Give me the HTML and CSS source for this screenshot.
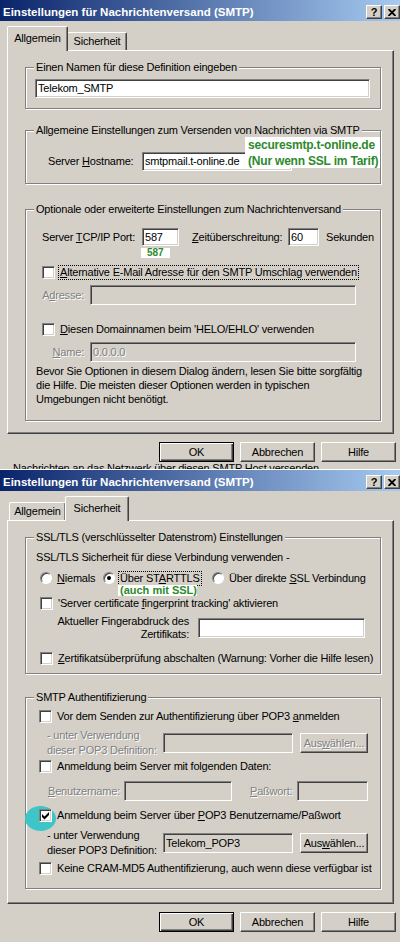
FILE: index.html
```html
<!DOCTYPE html>
<html lang="de">
<head>
    <meta charset="UTF-8">
    <meta name="viewport" content="width=device-width, initial-scale=1.0">
    <title>Einstellungen für Nachrichtenversand (SMTP)</title>
    <link rel="stylesheet" href="styles.css">
</head>
<body>
    <!-- Reiter "Allgemein" -->
    <div class="dialog">
        <div class="titlebar">
            <span class="title">Einstellungen für Nachrichtenversand (SMTP)</span>
            <div class="caption-buttons">
                <span class="caption-btn help">?</span>
                <span class="caption-btn"><svg width="8" height="7" viewBox="0 0 8 7"><path d="M0.5 0 L7.5 7 M7.5 0 L0.5 7" stroke="#000" stroke-width="1.9" fill="none"/></svg></span>
            </div>
        </div>
        <div class="tabs">
            <div class="tab tab-general active">Allgemein</div>
            <div class="tab tab-security">Sicherheit</div>
        </div>
        <div class="panel">
            <fieldset class="group">
                <legend>Einen Namen für diese Definition eingeben</legend>
                <div class="group-body name-body">
                    <div class="input name-input">Telekom_SMTP</div>
                </div>
            </fieldset>

            <fieldset class="group host-group">
                <legend>Allgemeine Einstellungen zum Versenden von Nachrichten via SMTP</legend>
                <div class="group-body host-body">
                    <div class="row host-row">
                        <span class="host-label">Server <u>H</u>ostname:</span>
                        <div class="input host-input">smtpmail.t-online.de</div>
                        <div class="note host-note">securesmtp.t-online.de<br>(Nur wenn SSL im Tarif)</div>
                    </div>
                </div>
            </fieldset>

            <fieldset class="group extra-group">
                <legend>Optionale oder erweiterte Einstellungen zum Nachrichtenversand</legend>
                <div class="group-body extra-body">
                    <div class="row port-row">
                        <span class="port-label">Server <u>T</u>CP/IP Port:</span>
                        <div class="input port-input">587</div>
                        <span class="timeout-label"><u>Z</u>eitüberschreitung:</span>
                        <div class="input timeout-input">60</div>
                        <span class="seconds">Sekunden</span>
                        <div class="note port-note">587</div>
                    </div>
                    <div class="row check-row alt-row">
                        <span class="check"></span>
                        <span class="check-label focus"><u>A</u>lternative E-Mail Adresse für den SMTP Umschlag verwenden</span>
                    </div>
                    <div class="row field-row addr-row">
                        <span class="field-label off">A<u>d</u>resse:</span>
                        <div class="input off addr-input"></div>
                    </div>
                    <div class="row check-row helo-row">
                        <span class="check"></span>
                        <span class="check-label"><u>D</u>iesen Domainnamen beim 'HELO/EHLO' verwenden</span>
                    </div>
                    <div class="row field-row domain-row">
                        <span class="field-label off"><u>N</u>ame:</span>
                        <div class="input off addr-input text-off">0.0.0.0</div>
                    </div>
                    <p class="hint">Bevor Sie Optionen in diesem Dialog ändern, lesen Sie bitte sorgfältig<br>die Hilfe. Die meisten dieser Optionen werden in typischen<br>Umgebungen nicht benötigt.</p>
                </div>
            </fieldset>
        </div>
        <div class="btn-row">
            <div class="btn default">OK</div>
            <div class="btn">Abbrechen</div>
            <div class="btn">Hilfe</div>
        </div>
    </div>

    <div class="behind"><div class="behind-text">Nachrichten an das Netzwerk über diesen SMTP Host versenden</div></div>

    <!-- Reiter "Sicherheit" -->
    <div class="dialog second">
        <div class="titlebar">
            <span class="title">Einstellungen für Nachrichtenversand (SMTP)</span>
            <div class="caption-buttons">
                <span class="caption-btn help">?</span>
                <span class="caption-btn"><svg width="8" height="7" viewBox="0 0 8 7"><path d="M0.5 0 L7.5 7 M7.5 0 L0.5 7" stroke="#000" stroke-width="1.9" fill="none"/></svg></span>
            </div>
        </div>
        <div class="tabs">
            <div class="tab tab-general">Allgemein</div>
            <div class="tab tab-security active">Sicherheit</div>
        </div>
        <div class="panel">
            <fieldset class="group">
                <legend>SSL/TLS (verschlüsselter Datenstrom) Einstellungen</legend>
                <div class="group-body ssl-body">
                    <div class="ssl-text">SSL/TLS Sicherheit für diese Verbindung verwenden -</div>
                    <div class="row radio-row">
                        <div class="radio-item item-never">
                            <span class="radio"></span>
                            <span class="check-label"><u>N</u>iemals</span>
                        </div>
                        <div class="radio-item item-starttls">
                            <span class="radio on"></span>
                            <span class="check-label focus">Über ST<u>A</u>RTTLS</span>
                        </div>
                        <div class="radio-item">
                            <span class="radio"></span>
                            <span class="check-label">Über direkte <u>S</u>SL Verbindung</span>
                        </div>
                        <div class="note ssl-note">(auch mit SSL)</div>
                    </div>
                    <div class="row check-row print-row">
                        <span class="check"></span>
                        <span class="check-label">'Server certificate <u>f</u>ingerprint tracking' aktivieren</span>
                    </div>
                    <div class="row print-field">
                        <span class="print-label">Aktueller Fingerabdruck des<br>Zertifikats:</span>
                        <div class="input print-input"></div>
                    </div>
                    <div class="row check-row cert-row">
                        <span class="check"></span>
                        <span class="check-label"><u>Z</u>ertifikatsüberprüfung abschalten (Warnung: Vorher die Hilfe lesen)</span>
                    </div>
                </div>
            </fieldset>

            <fieldset class="group auth-group">
                <legend>SMTP Authentifizierung</legend>
                <div class="group-body auth-body">
                    <div class="row check-row pop-row">
                        <span class="check"></span>
                        <span class="check-label">Vor dem Senden zur Authentifizierung über POP3 <u>a</u>nmelden</span>
                    </div>
                    <div class="row via-row">
                        <span class="via-label off">- unter Verwendung<br>dieser POP3 Definition:</span>
                        <div class="input off via-input"></div>
                        <div class="btn small off">Aus<u>w</u>ählen...</div>
                    </div>
                    <div class="row check-row login-row">
                        <span class="check"></span>
                        <span class="check-label">Anmeldung beim Server mit folgenden Daten:</span>
                    </div>
                    <div class="row user-row">
                        <span class="user-label off"><u>B</u>enutzername:</span>
                        <div class="input off user-input"></div>
                        <span class="pass-label off"><u>P</u>aßwort:</span>
                        <div class="input off pass-input"></div>
                    </div>
                    <div class="row check-row pop-login-row">
                        <span class="marker"></span>
                        <span class="check"><svg width="11" height="11" viewBox="0 0 11 11"><polygon points="2,4 4.5,6.5 9,2 9,5 4.5,9.5 2,7" fill="#000"/></svg></span>
                        <span class="check-label">Anmeldung beim Server über <u>P</u>OP3 Benutzername/Paßwort</span>
                    </div>
                    <div class="row via-row via-on">
                        <span class="via-label">- unter Verwendung<br>dieser POP3 Definition:</span>
                        <div class="input off via-input">Telekom_POP3</div>
                        <div class="btn small">Aus<u>w</u>ählen...</div>
                    </div>
                    <div class="row check-row cram-row">
                        <span class="check"></span>
                        <span class="check-label">Keine CRAM-MD5 Authentifizierung, auch wenn diese verfügbar ist</span>
                    </div>
                </div>
            </fieldset>
        </div>
        <div class="btn-row">
            <div class="btn default">OK</div>
            <div class="btn">Abbrechen</div>
            <div class="btn">Hilfe</div>
        </div>
    </div>
</body>
</html>
```

FILE: styles.css
```css
/* Windows 2000 dialog look */
body {
    margin: 0;
    width: 400px;
    height: 942px;
    overflow: hidden;
    background-color: #d4d0c8;
    font-family: "Liberation Sans", Arial, sans-serif;
    font-size: 11px;
    line-height: 13px;
    letter-spacing: -0.2px;
    color: #000;
}

u {
    text-decoration-thickness: 1px;
    text-underline-offset: 1px;
}

/* title bar */
.titlebar {
    height: 21px;
    box-sizing: border-box;
    padding: 4px 0 0 3px;
    display: flex;
    justify-content: space-between;
    background: linear-gradient(to right, #0a246a, #a6caf0);
    color: #fff;
}

.title {
    font-weight: bold;
    font-size: 11.5px;
    line-height: 17px;
    letter-spacing: 0;
    white-space: nowrap;
}

.caption-buttons {
    display: flex;
    gap: 2px;
    margin-top: 1px;
}

.caption-btn {
    width: 16px;
    height: 14px;
    box-sizing: border-box;
    display: flex;
    align-items: center;
    justify-content: center;
    background-color: #d4d0c8;
    border: 1px solid;
    border-color: #fff #404040 #404040 #fff;
    box-shadow: inset -1px -1px #808080;
    color: #000;
}

.caption-btn.help {
    font-weight: bold;
    font-size: 11px;
    letter-spacing: 0;
}

.second {
    border-top: 1px solid #fff;
}

/* tabs */
.tabs {
    height: 29px;
    box-sizing: border-box;
    padding-left: 9px;
    display: flex;
    align-items: flex-end;
}

.tab {
    height: 18px;
    box-sizing: border-box;
    padding-top: 2px;
    text-align: center;
    border: 1px solid;
    border-bottom: none;
    border-color: #fff #404040 #fff #fff;
    border-radius: 2px 2px 0 0;
    box-shadow: inset -1px 0 #808080;
    background-color: #d4d0c8;
}

.tab-general {
    width: 57px;
}

.tab-security {
    width: 60px;
    margin-left: 1px;
}

.tab.active {
    height: 25px;
    padding-top: 5px;
    margin: 0 -2px -1px -2px;
    position: relative;
    z-index: 1;
}

.tab-general.active {
    width: 61px;
}

.tab-security.active {
    width: 64px;
    margin-left: -1px;
}

/* tab page */
.panel {
    margin-left: 7px;
    width: 387px;
    height: 384px;
    box-sizing: border-box;
    padding: 10px 0 0 17px;
    border: 1px solid;
    border-color: #fff #404040 #404040 #fff;
    box-shadow: inset -1px -1px #808080;
}

.group {
    width: 356px;
    box-sizing: border-box;
    margin: 0;
    padding: 0;
    min-width: 0;
    border: 1px solid #808080;
    box-shadow: 1px 1px 0 #fff, inset 1px 1px 0 #fff;
}

.group legend {
    margin-left: 8px;
    padding: 0 2px;
    line-height: 13px;
    background-color: #d4d0c8;
}

.row {
    display: flex;
    align-items: center;
    position: relative;
}

/* controls */
.input {
    height: 20px;
    box-sizing: border-box;
    flex: none;
    padding: 0 2px;
    line-height: 18px;
    white-space: nowrap;
    overflow: hidden;
    background-color: #fff;
    border: 1px solid;
    border-color: #808080 #fff #fff #808080;
    box-shadow: inset 1px 1px #404040, inset -1px -1px #d4d0c8;
}

.input.off {
    background-color: #d4d0c8;
}

.off,
.text-off {
    color: #808080;
    text-shadow: 1px 1px 0 #fff;
}

.check {
    width: 13px;
    height: 13px;
    box-sizing: border-box;
    flex: none;
    position: relative;
    background-color: #fff;
    border: 1px solid;
    border-color: #808080 #fff #fff #808080;
    box-shadow: inset 1px 1px #404040, inset -1px -1px #d4d0c8;
}

.check svg {
    display: block;
}

.check-row {
    height: 15px;
}

.check-label {
    margin-left: 5px;
    white-space: nowrap;
}

.focus {
    margin-left: 3px;
    padding: 0 1px;
    border: 1px dotted #000;
}

.radio {
    width: 12px;
    height: 12px;
    box-sizing: border-box;
    flex: none;
    display: flex;
    align-items: center;
    justify-content: center;
    border-radius: 50%;
    background-color: #fff;
    border: 1px solid;
    border-color: #808080 #fff #fff #808080;
    box-shadow: inset 1px 1px #404040;
}

.radio.on::after {
    content: "";
    width: 4px;
    height: 4px;
    border-radius: 50%;
    background-color: #000;
}

.btn {
    width: 75px;
    height: 20px;
    box-sizing: border-box;
    display: flex;
    align-items: center;
    justify-content: center;
    background-color: #d4d0c8;
    border: 1px solid;
    border-color: #fff #404040 #404040 #fff;
    box-shadow: inset -1px -1px #808080;
}

.btn.default {
    border-color: #000;
    box-shadow: inset 1px 1px #fff, inset -1px -1px #404040, inset -2px -2px #808080;
}

.btn.small {
    width: 68px;
    margin-left: 7px;
}

.btn-row {
    height: 20px;
    margin-top: 8px;
    padding-right: 4px;
    display: flex;
    justify-content: flex-end;
    gap: 6px;
}

/* green notes pasted over the screenshot */
.note {
    position: absolute;
    background-color: #fff;
    color: #2d8a2d;
    font-weight: bold;
    letter-spacing: 0;
    white-space: nowrap;
}

.host-note {
    left: 197px;
    top: -15px;
    width: 135px;
    height: 31px;
    padding-left: 3px;
    box-sizing: border-box;
    font-size: 12px;
    line-height: 16px;
    letter-spacing: -0.2px;
}

.port-note {
    left: 99px;
    top: 20px;
    width: 29px;
    height: 10px;
    padding-left: 6px;
    box-sizing: border-box;
    font-size: 10px;
    line-height: 10px;
}

.ssl-note {
    left: 78px;
    top: 15px;
    width: 79px;
    height: 11px;
    padding-left: 2px;
    box-sizing: border-box;
    font-size: 11px;
    line-height: 11px;
}

/* teal circle round the checked box */
.marker {
    position: absolute;
    left: -14px;
    top: -2px;
    width: 31px;
    height: 25px;
    border-radius: 50%;
    background-color: #3ec5c8;
}

/* dialog 1: Allgemein */
.name-body {
    padding: 5px 0 10px 9px;
}

.name-input {
    width: 335px;
    height: 19px;
    line-height: 17px;
}

.host-group {
    margin-top: 15px;
}

.host-body {
    padding: 15px 0 12px 22px;
}

.host-row {
    height: 19px;
}

.host-label {
    width: 94px;
    flex: none;
}

.host-input {
    width: 150px;
    height: 19px;
    line-height: 17px;
}

.extra-group {
    margin-top: 19px;
}

.extra-body {
    padding: 12px 0 14px 16px;
}

.port-row {
    height: 18px;
}

.port-label {
    width: 100px;
    flex: none;
}

.port-input {
    width: 37px;
    height: 18px;
    line-height: 16px;
}

.timeout-label {
    width: 96px;
    margin-left: 13px;
    flex: none;
}

.timeout-input {
    width: 31px;
    height: 18px;
    line-height: 16px;
}

.seconds {
    margin-left: 7px;
}

.alt-row {
    margin-top: 19px;
}

.field-row {
    height: 20px;
}

.field-label {
    width: 42px;
    flex: none;
    text-align: right;
}

.addr-row {
    margin-top: 5px;
}

.addr-input {
    width: 266px;
    margin-left: 6px;
}

.helo-row {
    margin-top: 17px;
}

.domain-row {
    margin-top: 5px;
}

.hint {
    margin: 2px 0 0 -6px;
    line-height: 14px;
    white-space: nowrap;
}

/* strip of the window underneath, only the top of its text shows */
.behind {
    height: 7px;
    overflow: hidden;
    padding-left: 13px;
}

.behind-text {
    margin-top: -2px;
    line-height: 16px;
    white-space: nowrap;
}

/* dialog 2: Sicherheit */
.ssl-body {
    padding: 0 0 7px 10px;
}

.ssl-text {
    margin-top: 6px;
    line-height: 14px;
}

.radio-row {
    height: 16px;
    margin: 6px 0 0 4px;
}

.radio-item {
    display: flex;
    align-items: center;
    flex: none;
}

.item-never {
    width: 63px;
}

.item-starttls {
    width: 109px;
}

.print-row {
    margin: 10px 0 0 4px;
}

.print-field {
    height: 20px;
    margin-top: 7px;
}

.print-label {
    width: 153px;
    flex: none;
    text-align: right;
    line-height: 13px;
}

.print-input {
    width: 167px;
    margin-left: 9px;
}

.cert-row {
    margin: 13px 0 0 4px;
}

.auth-group {
    margin-top: 17px;
}

.auth-body {
    padding: 5px 0 12px 13px;
}

.via-row {
    height: 20px;
    margin-top: 9px;
}

.via-label {
    width: 116px;
    margin-left: 8px;
    flex: none;
    line-height: 15px;
    white-space: nowrap;
}

.via-input {
    width: 130px;
}

.via-on {
    margin-top: 10px;
}

.via-on .via-input {
    color: #000;
    text-shadow: none;
}

.login-row {
    margin-top: 6px;
}

.user-row {
    height: 20px;
    margin-top: 7px;
}

.user-label {
    width: 76px;
    margin-left: 9px;
    flex: none;
}

.user-input {
    width: 108px;
}

.pass-label {
    width: 47px;
    margin-left: 18px;
    flex: none;
}

.pass-input {
    width: 71px;
}

.pop-login-row {
    margin-top: 7px;
}

.cram-row {
    margin-top: 8px;
}
```
